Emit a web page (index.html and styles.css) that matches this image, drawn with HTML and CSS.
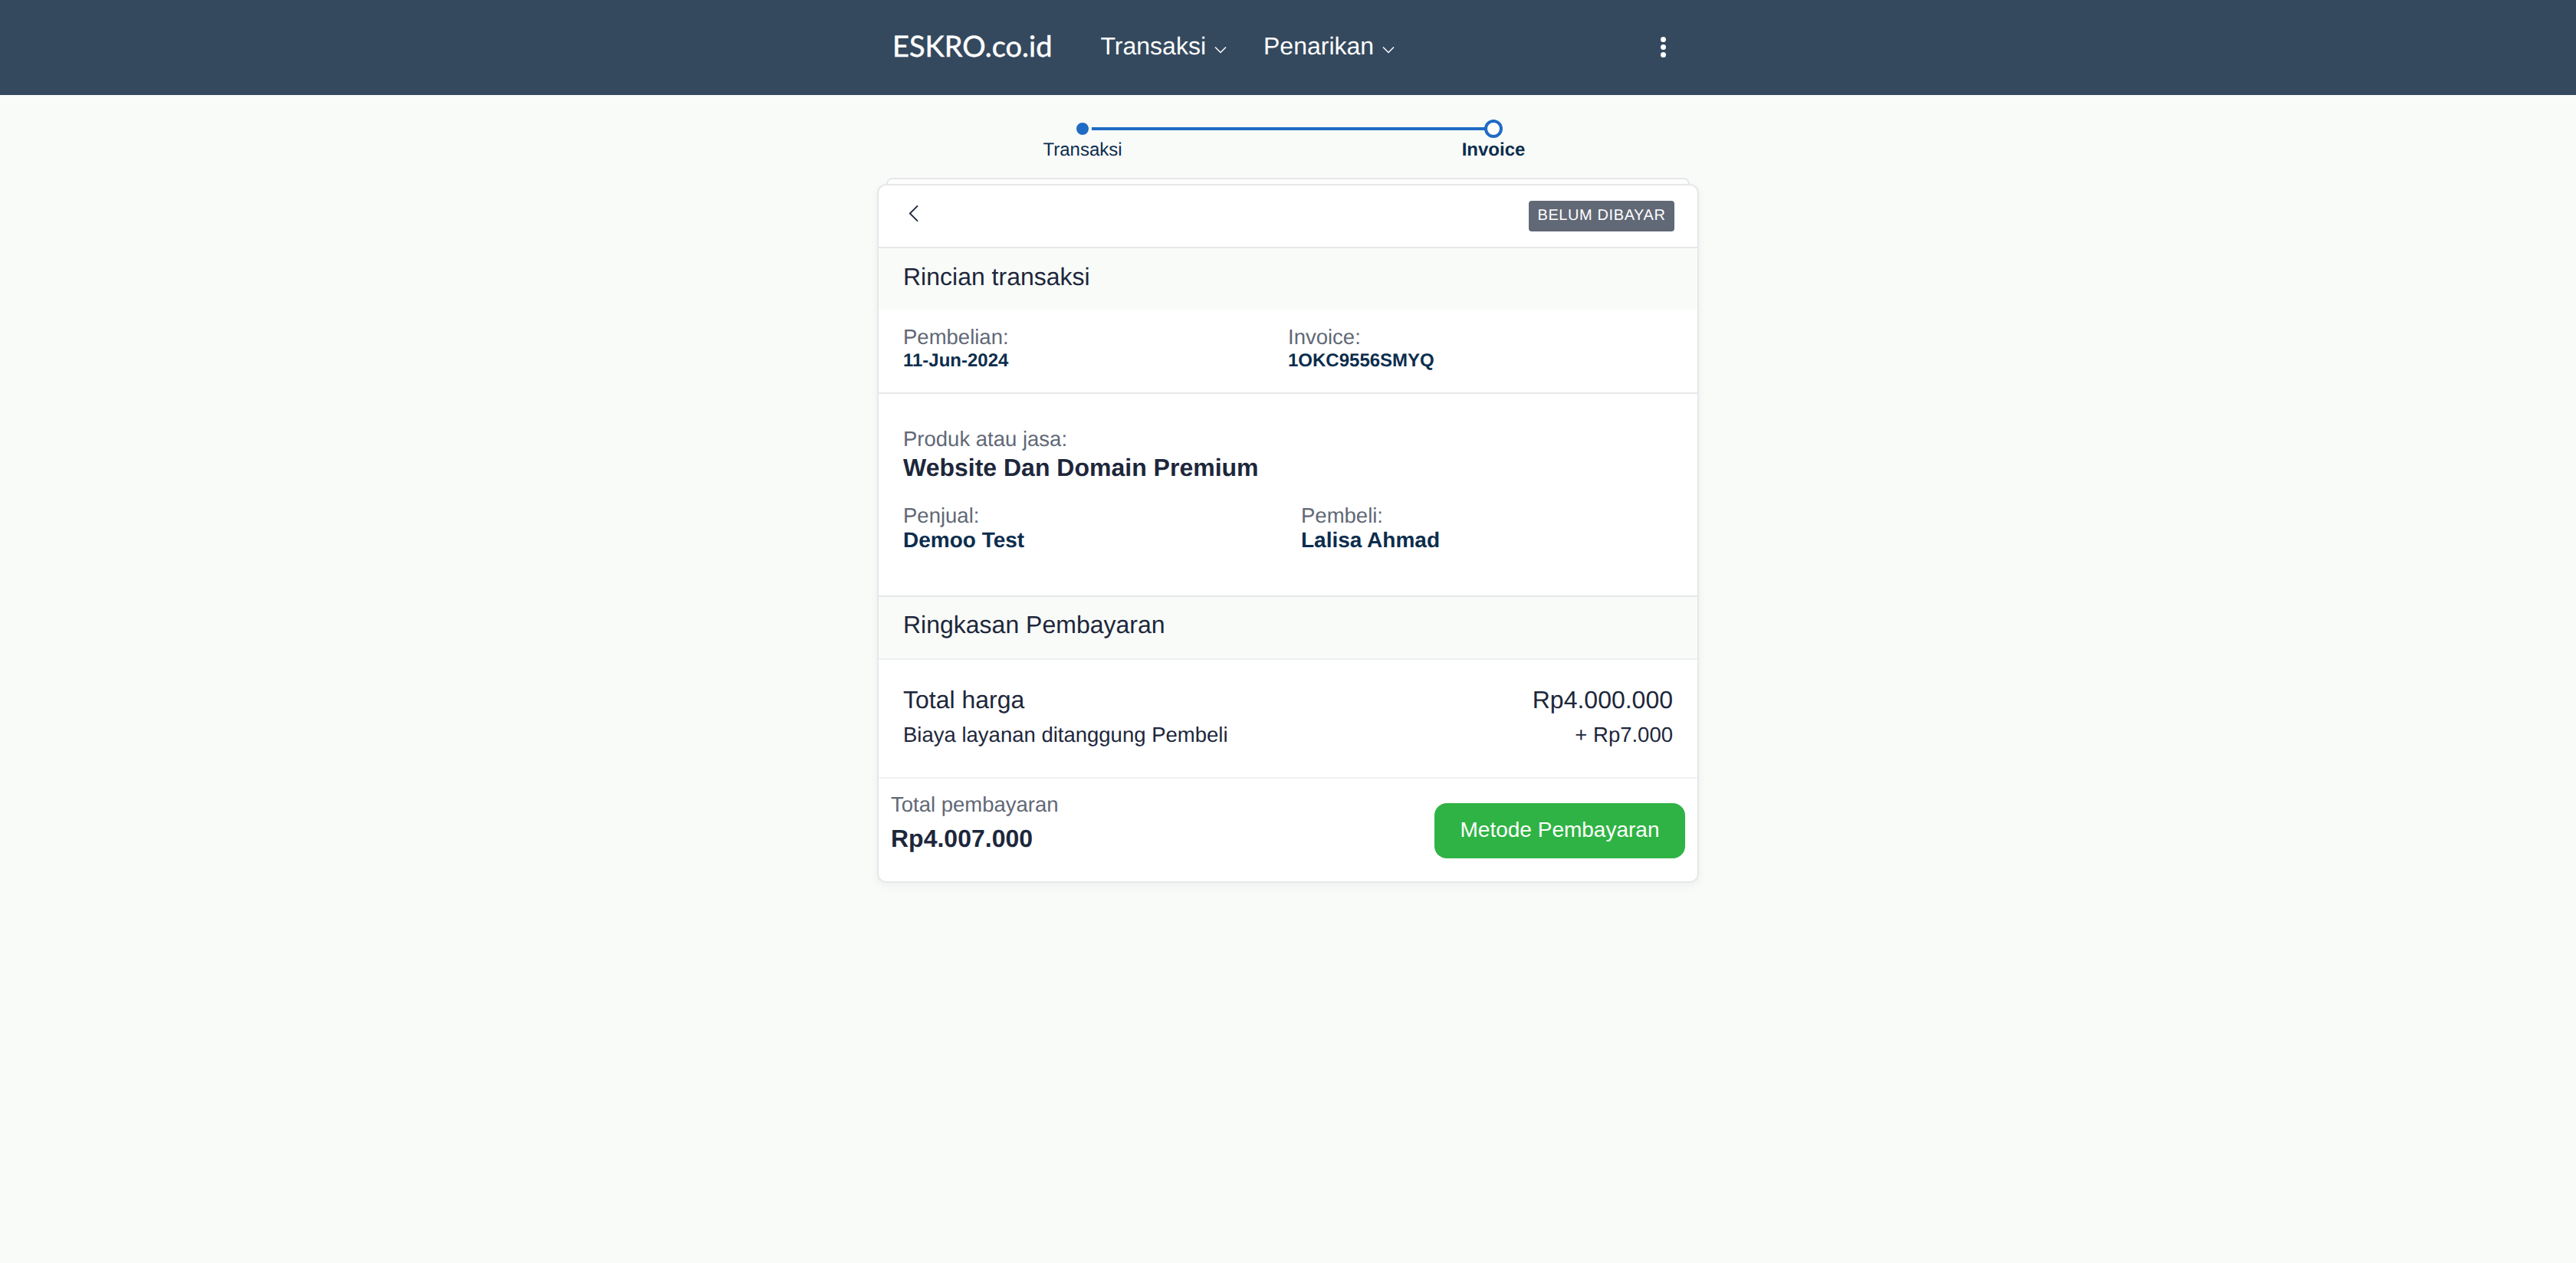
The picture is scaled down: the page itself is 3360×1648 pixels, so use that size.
FILE: index.html
```html
<!DOCTYPE html>
<html lang="id">

<head>
    <meta charset="UTF-8">
    <meta name="viewport" content="width=device-width, initial-scale=1.0">
    <title>Invoice</title>
    <link rel="stylesheet" href="styles.css">
</head>

<body>
    <header class="topbar">
        <div class="topbar-in">
            <a class="logo">ESKRO.co.id</a>
            <nav class="menu">
                <a class="menu-item">Transaksi
                    <svg class="caret" viewBox="0 0 16 10"><path d="M1 1.5 8 8.5 15 1.5" /></svg>
                </a>
                <a class="menu-item">Penarikan
                    <svg class="caret" viewBox="0 0 16 10"><path d="M1 1.5 8 8.5 15 1.5" /></svg>
                </a>
            </nav>
            <div class="kebab"><i></i><i></i><i></i></div>
        </div>
    </header>

    <main class="page">
        <ul class="steps">
            <li class="step done"><span class="dot"></span>Transaksi</li>
            <li class="step current"><span class="dot"></span>Invoice</li>
        </ul>

        <div class="card-behind"></div>
        <section class="card">
            <div class="card-head">
                <svg class="back" viewBox="0 0 14 24"><path d="M13 1 2 12 13 23" /></svg>
                <span class="badge">BELUM DIBAYAR</span>
            </div>

            <h2 class="sec-title first">Rincian transaksi</h2>
            <div class="meta">
                <div>
                    <p class="label">Pembelian:</p>
                    <p class="meta-value">11-Jun-2024</p>
                </div>
                <div>
                    <p class="label">Invoice:</p>
                    <p class="meta-value">1OKC9556SMYQ</p>
                </div>
            </div>

            <div class="product">
                <p class="label tall">Produk atau jasa:</p>
                <p class="product-name">Website Dan Domain Premium</p>
                <div class="parties">
                    <div>
                        <p class="label">Penjual:</p>
                        <p class="party">Demoo Test</p>
                    </div>
                    <div>
                        <p class="label">Pembeli:</p>
                        <p class="party">Lalisa Ahmad</p>
                    </div>
                </div>
            </div>

            <h2 class="sec-title second">Ringkasan Pembayaran</h2>
            <div class="sum">
                <div class="sum-row big">
                    <span>Total harga</span>
                    <span>Rp4.000.000</span>
                </div>
                <div class="sum-row small">
                    <span>Biaya layanan ditanggung Pembeli</span>
                    <span>+ Rp7.000</span>
                </div>
            </div>

            <div class="pay">
                <div>
                    <p class="pay-label">Total pembayaran</p>
                    <p class="pay-total">Rp4.007.000</p>
                </div>
                <button class="pay-btn">Metode Pembayaran</button>
            </div>
        </section>
    </main>
</body>

</html>
```

FILE: styles.css
```css
* {
    margin: 0;
    padding: 0;
    box-sizing: border-box;
    list-style: none;
}

body {
    background-color: #f9fbf9;
    color: #1d273b;
    font-family: "Liberation Sans", Arial, sans-serif;
    text-rendering: geometricPrecision;
    min-height: 100vh;
}

.topbar {
    height: 124px;
    background-color: #34495e;
    color: #fff;
}

.topbar-in {
    width: 1072px;
    height: 120px;
    margin: 0 auto;
    padding: 0 43px 0 20px;
    display: flex;
    align-items: center;
}

.logo {
    font-family: "Lato", sans-serif;
    font-size: 38px;
    line-height: 48px;
    -webkit-text-stroke: 0.5px #fff;
}

.menu {
    display: flex;
    gap: 48px;
    margin-left: 63px;
}

.menu-item {
    display: flex;
    align-items: center;
    gap: 11px;
    font-size: 32px;
    line-height: 40px;
}

.caret {
    width: 16px;
    height: 10px;
    margin-top: 10px;
    fill: none;
    stroke: #fff;
    stroke-width: 1.5;
}

.kebab {
    margin-left: auto;
    display: flex;
    flex-direction: column;
    gap: 3px;
    padding-top: 2px;
}

.kebab i {
    display: block;
    width: 7px;
    height: 7px;
    border-radius: 50%;
    background-color: #fff;
}

.page {
    width: 1072px;
    margin: 0 auto;
}

/* stepper */
.steps {
    display: grid;
    grid-template-columns: 1fr 1fr;
    padding-top: 32px;
}

.step {
    position: relative;
    display: flex;
    flex-direction: column;
    align-items: center;
    gap: 2px;
    font-size: 24px;
    line-height: 28px;
    color: #0c2d4d;
}

.step .dot {
    width: 24px;
    height: 24px;
    border-radius: 50%;
    position: relative;
    z-index: 1;
}

.step.done .dot {
    background-color: #206bc4;
    border: 4px solid #f9fbf9;
}

.step.current {
    font-weight: 700;
}

.step.current .dot {
    background-color: #fff;
    border: 4px solid #206bc4;
}

.step.done::after {
    content: "";
    position: absolute;
    left: 50%;
    width: 100%;
    top: 10px;
    height: 4px;
    background-color: #206bc4;
}

/* card */
.card-behind {
    height: 8px;
    margin: 22px 12px 0;
    background-color: #fff;
    border: 2px solid #e6e7e9;
    border-bottom: 0;
    border-radius: 12px 12px 0 0;
}

.card {
    background-color: #fff;
    border: 2px solid #e6e7e9;
    border-radius: 12px;
    box-shadow: 0 4px 12px rgba(29, 39, 59, .05);
}

.card-head {
    height: 82px;
    padding: 20px 30px 0 39px;
    display: flex;
    justify-content: space-between;
    align-items: flex-start;
    border-bottom: 2px solid #e6e7e9;
}

.back {
    width: 13px;
    height: 23px;
    margin-top: 5px;
    fill: none;
    stroke: #1d273b;
    stroke-width: 2;
}

.badge {
    width: 190px;
    height: 40px;
    line-height: 38px;
    text-align: center;
    background-color: #616876;
    color: #fff;
    font-size: 20px;
    letter-spacing: .6px;
    border-radius: 4px;
}

.sec-title {
    padding: 0 32px;
    background-color: #f9fbf9;
    font-size: 32px;
    font-weight: 400;
    line-height: 36px;
}

.sec-title.first {
    padding-top: 19px;
    padding-bottom: 25px;
}

.sec-title.second {
    padding-top: 18px;
    padding-bottom: 26px;
    border-bottom: 2px solid #eeeff1;
}

.label {
    color: #616876;
    font-size: 27.5px;
    line-height: 32px;
}

.label.tall {
    line-height: 34px;
}

.meta {
    display: grid;
    grid-template-columns: 1fr 1fr;
    padding: 20px 32px 28px;
    border-bottom: 2px solid #e6e7e9;
}

.meta-value {
    margin-top: 2px;
    color: #0c2d4d;
    font-size: 24px;
    font-weight: 700;
    line-height: 26px;
}

.product {
    padding: 42px 32px 56px;
    border-bottom: 2px solid #e6e7e9;
}

.product-name {
    font-size: 32px;
    font-weight: 700;
    line-height: 40px;
}

.parties {
    display: grid;
    grid-template-columns: 519px 1fr;
    margin-top: 27px;
}

.party {
    color: #0c2d4d;
    font-size: 28px;
    font-weight: 700;
    line-height: 32px;
}

.sum {
    padding: 32px 32px 37px;
    border-bottom: 2px solid #f0f1f2;
}

.sum-row {
    display: flex;
    justify-content: space-between;
}

.sum-row.big {
    font-size: 32px;
    line-height: 40px;
}

.sum-row.small {
    margin-top: 8px;
    font-size: 27.5px;
    line-height: 36px;
}

.pay {
    display: flex;
    justify-content: space-between;
    align-items: flex-start;
    padding: 16px 16px 30px;
}

.pay-label {
    color: #616876;
    font-size: 27.5px;
    line-height: 36px;
}

.pay-total {
    margin-top: 6px;
    font-size: 32px;
    font-weight: 700;
    line-height: 40px;
}

.pay-btn {
    width: 327px;
    height: 72px;
    margin-top: 16px;
    padding-bottom: 3px;
    background-color: #2fb344;
    border: 0;
    border-radius: 16px;
    color: #fff;
    font-family: inherit;
    font-size: 28px;
}
```
